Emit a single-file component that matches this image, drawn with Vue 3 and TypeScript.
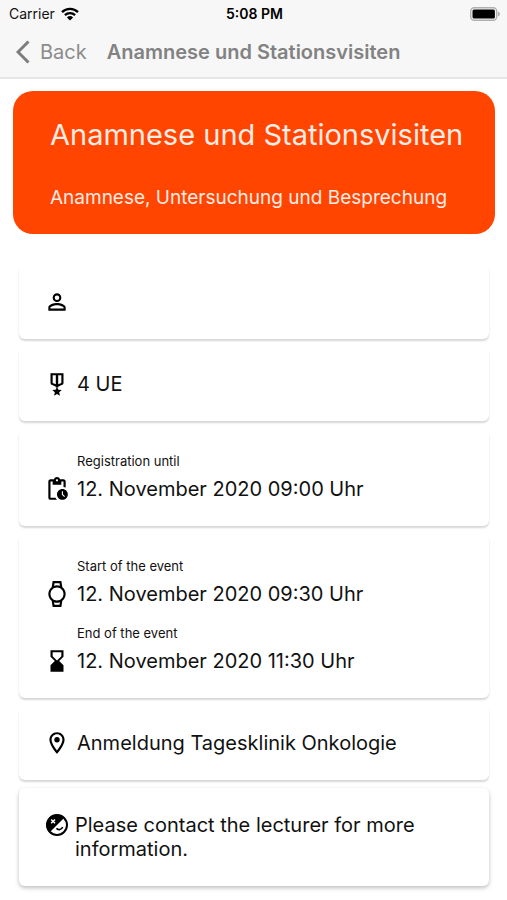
<script setup lang="ts">
interface Entry {
  icon: string
  label?: string
  value: string
}

interface Card {
  id: string
  note?: boolean
  entries: Entry[]
}

const title = 'Anamnese und Stationsvisiten'
const subtitle = 'Anamnese, Untersuchung und Besprechung'

const icons: Record<string, string> = {
  person:
    'M12 4a4 4 0 1 1 0 8 4 4 0 0 1 0-8m0 1.9a2.1 2.1 0 1 0 0 4.2 2.1 2.1 0 0 0 0-4.2M12 13c2.67 0 8 1.34 8 4v3H4v-3c0-2.66 5.33-4 8-4m0 1.9c-2.97 0-6.1 1.46-6.1 2.1v1.1h12.2V17c0-.64-3.13-2.1-6.1-2.1z',
  medal:
    'M6 2h12v9c0 .8-.5 1.500-1.200 1.800L13 14.600V16h-2v-1.400l-3.800-1.800C6.500 12.500 6 11.800 6 11V2zm2 2v7l2.900 1.300V4H8zm5.100 0v8.300L16 11V4h-2.900zM12 14.500l1.250 2.850 3.150.3-2.400 2.050.72 3.100L12 21.150 9.280 22.800 10 19.700l-2.400-2.050 3.150-.3z',
  deadline:
    'M17 12c-2.760 0-5 2.240-5 5s2.240 5 5 5 5-2.240 5-5-2.240-5-5-5zm1.650 7.350L16.500 17.200V14h1v2.790l1.850 1.850-.7.710zM18 3h-3.180C14.400 1.840 13.300 1 12 1s-2.400.84-2.820 2H6c-1.100 0-2 .9-2 2v15c0 1.100.9 2 2 2h6.110a6.740 6.740 0 0 1-1.420-2H6V5h2v3h8V5h2v5.080c.71.100 1.380.31 2 .6V5c0-1.100-.9-2-2-2zm-6 2c-.55 0-1-.45-1-1s.45-1 1-1 1 .45 1 1-.45 1-1 1z',
  watch:
    'M14.310 2l.41 2.480C13.870 4.170 12.960 4 12 4s-1.870.17-2.710.47L9.700 2h4.610m.41 17.520L14.310 22H9.700l-.41-2.470c.84.300 1.750.47 2.710.47s1.870-.17 2.720-.48M16 0H8l-.95 5.730C5.190 7.190 4 9.450 4 12s1.190 4.810 3.050 6.270L8 24h8l.96-5.730C18.810 16.810 20 14.540 20 12s-1.190-4.810-3.040-6.270L16 0zm-4 18c-3.310 0-6-2.690-6-6s2.690-6 6-6 6 2.690 6 6-2.690 6-6 6z',
  hourglass: 'M18 22l-.01-6L14 12l3.990-4.010L18 2H6v6l4 4-4 3.990V22h12zM8 7.500V4h8v3.500l-4 4-4-4z',
  place:
    'M12 2C8.130 2 5 5.130 5 9c0 5.250 7 13 7 13s7-7.750 7-13c0-3.870-3.130-7-7-7zM7 9c0-2.760 2.240-5 5-5s5 2.240 5 5c0 2.880-2.880 7.190-5 9.880C9.920 16.210 7 11.850 7 9zm5-2.500a2.500 2.500 0 1 0 0 5 2.500 2.500 0 0 0 0-5z',
}

const cards: Card[] = [
  { id: 'lecturer', entries: [{ icon: 'person', value: '' }] },
  { id: 'units', entries: [{ icon: 'medal', value: '4 UE' }] },
  {
    id: 'registration',
    entries: [{ icon: 'deadline', label: 'Registration until', value: '12. November 2020 09:00 Uhr' }],
  },
  {
    id: 'schedule',
    entries: [
      { icon: 'watch', label: 'Start of the event', value: '12. November 2020 09:30 Uhr' },
      { icon: 'hourglass', label: 'End of the event', value: '12. November 2020 11:30 Uhr' },
    ],
  },
  { id: 'location', entries: [{ icon: 'place', value: 'Anmeldung Tagesklinik Onkologie' }] },
  {
    id: 'note',
    note: true,
    entries: [{ icon: 'masks', value: 'Please contact the lecturer for more information.' }],
  },
]
</script>

<template>
  <div class="screen">
    <header class="top">
      <div class="status">
        <span class="carrier">
          Carrier
          <svg class="wifi" viewBox="0 0 18 14" aria-hidden="true">
            <path d="M1 5.200a11.500 11.500 0 0 1 16 0M3.900 8.200a7.400 7.400 0 0 1 10.200 0" fill="none" stroke="#000" stroke-width="2.300" />
            <path d="M9 13.600L5.900 10.400a4.500 4.500 0 0 1 6.200 0z" />
          </svg>
        </span>
        <span class="time">5:08 PM</span>
        <span class="power">
          <svg class="battery" viewBox="0 0 30 14" aria-hidden="true">
            <rect x="0.700" y="0.700" width="26" height="12.600" rx="3.500" fill="#f7f7f7" stroke="#b0b0b0" stroke-width="1.400" />
            <rect x="2.500" y="2.500" width="22.400" height="9" rx="1.500" />
            <path d="M28 4.700c1.200.3 1.900 1.300 1.900 2.300s-.7 2-1.900 2.300z" fill="#b0b0b0" />
          </svg>
        </span>
      </div>
      <nav class="bar">
        <button class="back" type="button">
          <svg class="chevron" viewBox="0 0 14 24" aria-hidden="true">
            <path d="M12.500 1.500L2 12l10.500 10.500" fill="none" stroke="#7d7d7d" stroke-width="3" />
          </svg>
          Back
        </button>
        <span class="bar-title">{{ title }}</span>
      </nav>
    </header>

    <main class="content">
      <section class="hero">
        <h1>{{ title }}</h1>
        <p>{{ subtitle }}</p>
      </section>

      <div class="cards">
        <section v-for="card in cards" :key="card.id" class="card" :class="{ note: card.note }">
          <div v-for="entry in card.entries" :key="entry.icon" class="entry">
            <p v-if="entry.label" class="label">{{ entry.label }}</p>
            <div class="row">
              <svg v-if="entry.icon === 'masks'" class="icon" viewBox="0 0 24 24" aria-hidden="true">
                <circle cx="12" cy="12" r="10" fill="#fff" stroke="#000" stroke-width="2" />
                <path d="M4.500 19.500A10.600 10.600 0 0 1 19.500 4.500z" />
                <path d="M6.200 6.500l3.800 3.800M10 6.500l-3.800 3.800" stroke="#fff" stroke-width="1.500" />
                <path d="M11.500 15.200c1.300 2 4.800 2 6.200-1.200" fill="none" stroke="#000" stroke-width="1.700" />
              </svg>
              <svg v-else class="icon" viewBox="0 0 24 24" aria-hidden="true">
                <path fill-rule="evenodd" :d="icons[entry.icon]" />
              </svg>
              <p class="value">{{ entry.value }}</p>
            </div>
          </div>
        </section>
      </div>
    </main>
  </div>
</template>

<style>
body {
  margin: 0;
  background: #fff;
}
</style>

<style scoped>
.screen {
  font-family: Inter, 'Liberation Sans', sans-serif;
  color: #111;
}

h1,
p {
  margin: 0;
  font-weight: 400;
}

.top {
  background: #f7f7f7;
  border-bottom: 2px solid #e6e6e6;
}

.status {
  display: grid;
  grid-template-columns: 1fr auto 1fr;
  align-items: center;
  height: 27px;
  padding: 0 7px 0 9px;
  font-size: 14px;
}

.carrier {
  display: flex;
  align-items: center;
  gap: 6px;
}

.wifi {
  width: 18px;
  height: 14px;
}

.time {
  font-weight: 600;
  color: #000;
}

.power {
  display: flex;
  justify-content: flex-end;
}

.battery {
  width: 30px;
  height: 14px;
}

.bar {
  display: flex;
  align-items: center;
  gap: 20px;
  height: 50px;
  padding: 0 16px;
  color: #828282;
  font-size: 20px;
}

.back {
  display: flex;
  align-items: center;
  gap: 10px;
  padding: 0;
  border: 0;
  background: none;
  color: #8c8c8c;
  font: inherit;
  cursor: pointer;
}

.chevron {
  width: 14px;
  height: 24px;
}

.bar-title {
  font-weight: 600;
  white-space: nowrap;
}

.content {
  padding: 12px 12px 14px 13px;
}

.hero {
  padding: 24px 0 24px 37px;
  border-radius: 20px;
  background: #ff4500;
  color: #ffece4;
  white-space: nowrap;
}

.hero h1 {
  font-size: 29px;
  line-height: 40px;
}

.hero p {
  margin-top: 31px;
  font-size: 19px;
  line-height: 24px;
}

.cards {
  display: flex;
  flex-direction: column;
  gap: 8px;
  padding: 31px 6px 0;
}

.card {
  display: flex;
  flex-direction: column;
  gap: 20px;
  padding: 25px;
  border-radius: 6px;
  background: #fff;
  box-shadow: 0 2px 2px rgba(0, 0, 0, 0.16);
}

.note {
  box-shadow: 0 2px 4px rgba(0, 0, 0, 0.25);
}

.label {
  margin-bottom: 9px;
  padding-left: 33px;
  font-size: 13px;
  line-height: 14px;
}

.row {
  display: flex;
  align-items: flex-start;
  gap: 7px;
}

.icon {
  flex: none;
  width: 26px;
  height: 26px;
  margin: -1px 0;
}

.value {
  font-size: 20px;
  line-height: 24px;
}

.note .icon {
  height: 24px;
  margin: 0;
}

.note .row {
  gap: 5px;
}
</style>
